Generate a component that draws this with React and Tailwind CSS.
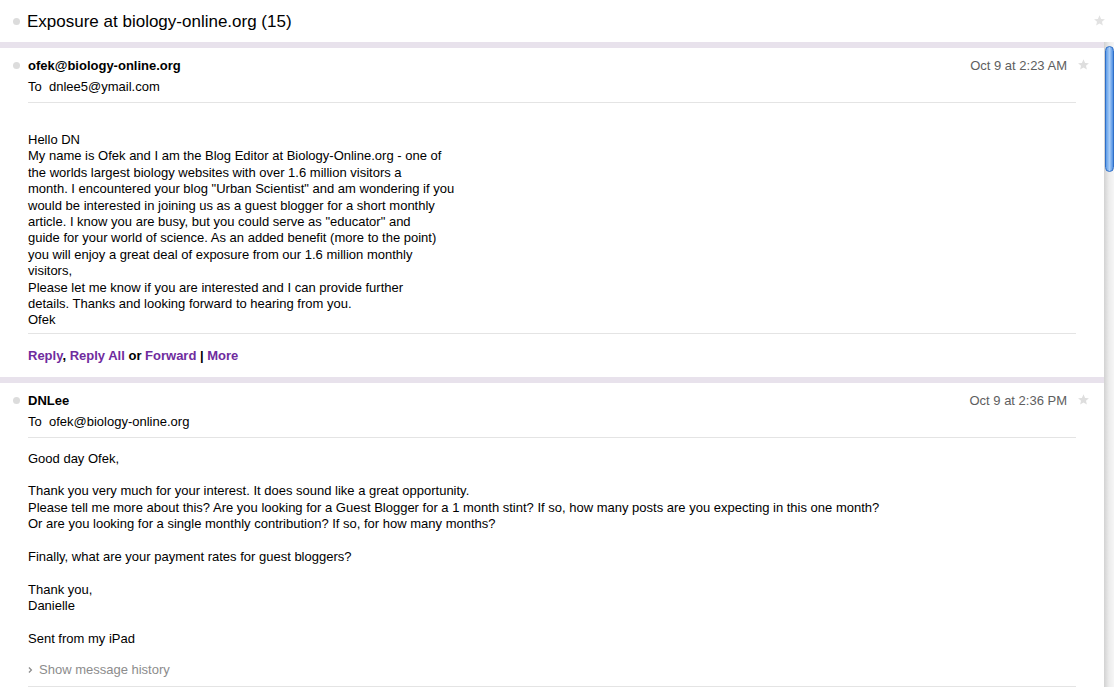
import { useState } from 'react';

const font = { fontFamily: '"Liberation Sans", Arial, Helvetica, sans-serif' };

function Star({ className = '' }) {
  return (
    <svg viewBox="0 0 24 24" className={className} fill="currentColor">
      <path d="M12 2.5l2.9 6.6 7.1.6-5.4 4.7 1.6 7-6.2-3.7-6.2 3.7 1.6-7L2 9.7l7.1-.6z" />
    </svg>
  );
}

function Dot() {
  return <div className="w-[7px] h-[7px] rounded-full bg-[#dcdcdc]" />;
}

function MessageHeader({ from, to, date }) {
  return (
    <div className="relative pt-[10px] pl-[28px] pr-[28px]">
      <div className="absolute left-[13px] top-[14px]">
        <Dot />
      </div>
      <div className="flex justify-between items-center h-[16px]">
        <span className="text-[13px] font-bold text-black leading-[16px]">{from}</span>
        <span className="text-[13px] text-[#5e5e5e] leading-[16px] mr-[9px]">{date}</span>
      </div>
      <div className="absolute right-[14px] top-[10px] text-[#dedede]">
        <Star className="w-[13px] h-[13px]" />
      </div>
      <div className="text-[13px] leading-[16px] mt-[5px] pb-[7px] border-b border-[#e4e4e4]">
        To&nbsp;&nbsp;{to}
      </div>
    </div>
  );
}

function Body({ lines, className }) {
  return (
    <div className={`text-[13px] leading-[16.4px] text-black ${className}`}>
      {lines.map((l, i) => (
        <div key={i} className="h-[16.4px] whitespace-pre">
          {l}
        </div>
      ))}
    </div>
  );
}

const msg1 = [
  'Hello DN',
  'My name is Ofek and I am the Blog Editor at Biology-Online.org - one of',
  'the worlds largest biology websites with over 1.6 million visitors a',
  'month. I encountered your blog "Urban Scientist" and am wondering if you',
  'would be interested in joining us as a guest blogger for a short monthly',
  'article. I know you are busy, but you could serve as "educator" and',
  'guide for your world of science. As an added benefit (more to the point)',
  'you will enjoy a great deal of exposure from our 1.6 million monthly',
  'visitors,',
  'Please let me know if you are interested and I can provide further',
  'details. Thanks and looking forward to hearing from you.',
  'Ofek',
];

const msg2 = [
  'Good day Ofek,',
  '',
  'Thank you very much for your interest. It does sound like a great opportunity.',
  'Please tell me more about this? Are you looking for a Guest Blogger for a 1 month stint? If so, how many posts are you expecting in this one month?',
  'Or are you looking for a single monthly contribution? If so, for how many months?',
  '',
  'Finally, what are your payment rates for guest bloggers?',
  '',
  'Thank you,',
  'Danielle',
  '',
  'Sent from my iPad',
];

export default function App() {
  const [showHistory, setShowHistory] = useState(false);
  const link = 'text-[#6f2c9e] hover:underline cursor-pointer';

  return (
    <div className="w-[1114px] h-[687px] overflow-hidden bg-white flex flex-col text-black" style={font}>
      <div className="h-[42px] shrink-0 flex items-center relative">
        <div className="absolute left-[13px] top-[18px]">
          <Dot />
        </div>
        <h1 className="ml-[27px] mt-[2px] text-[17px] leading-[22px] text-black">
          Exposure at biology-online.org (15)
        </h1>
        <div className="absolute right-[8px] top-[14px] text-[#e2e2e2]">
          <Star className="w-[13px] h-[13px]" />
        </div>
      </div>

      <div className="flex flex-1 min-h-0">
        <div className="flex-1 min-w-0">
          <div className="h-[6px] bg-[#e8e2ec]" />
          <MessageHeader from="ofek@biology-online.org" to="dnlee5@ymail.com" date="Oct 9 at 2:23 AM" />
          <div className="px-[28px]">
            <Body lines={msg1} className="pt-[29px] pb-[4px] border-b border-[#e4e4e4]" />
            <div className="pt-[14px] pb-[13px] text-[13px] leading-[16px] font-bold">
              <span className={link}>Reply</span>, <span className={link}>Reply All</span> or{' '}
              <span className={link}>Forward</span> | <span className={link}>More</span>
            </div>
          </div>
          <div className="h-[6px] bg-[#e8e2ec]" />
          <MessageHeader from="DNLee" to="ofek@biology-online.org" date="Oct 9 at 2:36 PM" />
          <div className="px-[28px]">
            <Body lines={msg2} className="pt-[13px]" />
            <div
              className="mt-[15px] pb-[8px] flex items-center gap-[6px] text-[13px] leading-[16px] text-[#8c8c8c] border-b border-[#e4e4e4] cursor-pointer"
              onClick={() => setShowHistory(!showHistory)}
            >
              <svg viewBox="0 0 8 10" className="w-[5px] h-[8px]" fill="none" stroke="#8c8c8c" strokeWidth="2">
                <path d="M1.5 1l4 4-4 4" />
              </svg>
              Show message history
            </div>
          </div>
        </div>

        <div className="w-[10px] shrink-0 bg-gradient-to-r from-[#d2d2d2] via-[#ececec] to-[#f6f6f6] relative">
          <div className="absolute left-[1px] right-0 top-[4px] h-[126px] rounded-t-[5px] rounded-b-[5px] border border-[#2f6fc7] bg-gradient-to-r from-[#5d9ce8] via-[#a9cdf6] to-[#4c8ee3]" />
        </div>
      </div>
    </div>
  );
}
